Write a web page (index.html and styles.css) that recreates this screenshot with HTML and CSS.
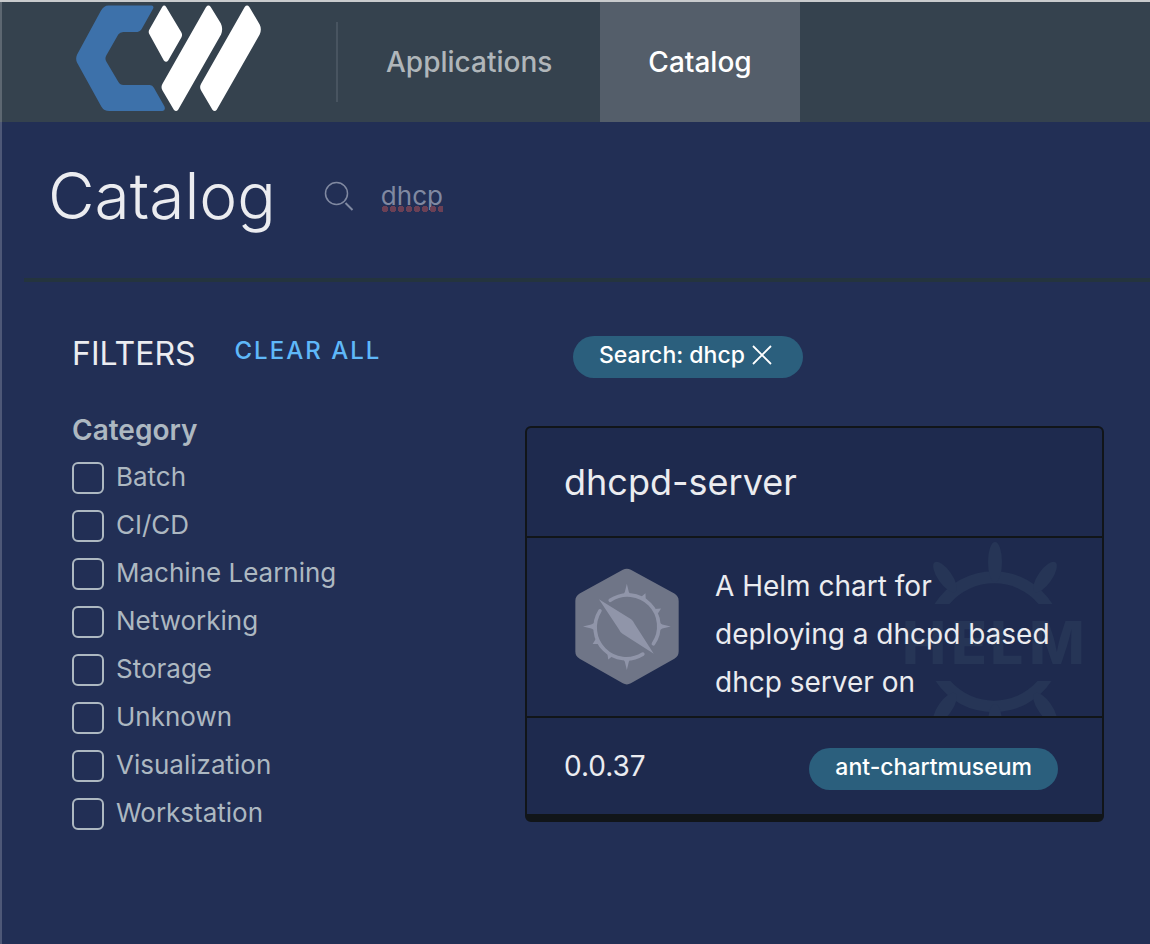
FILE: index.html
```html
<!DOCTYPE html>
<html lang="en">
<head>
<meta charset="utf-8">
<meta name="viewport" content="width=device-width, initial-scale=1">
<title>Catalog</title>
<link rel="stylesheet" href="styles.css">
</head>
<body>
<header class="header">
  <a class="brand" href="#" aria-label="Home">
    <svg class="brand-logo" viewBox="228 14 556 320" aria-hidden="true">
      <path fill="#3d71aa" d="M326 15H455Q463 16 460 24L425 86Q421 93 413 94H370Q360 94 355 102L319 165Q314 174 319 183L355 244Q361 254 370 254H450Q458 255 462 262L494 318Q498 331 488 332H328Q312 332 304 318L231 186Q226 175 231 163L302 32Q311 15 326 15Z"/>
      <g fill="#fff">
        <path d="M487 19Q493 11 499 19L544 94Q549 102 545 110L505 180Q499 188 492 180L449 102Q444 94 449 86Z"/>
        <path d="M619 19Q626 11 633 19L663 68Q671 84 664 102L535 328Q529 336 522 328L488 270Q482 260 488 250Z"/>
        <path d="M735 19Q742 11 749 19L780 72Q787 86 780 102L651 328Q645 336 638 328L604 270Q598 260 604 250Z"/>
      </g>
    </svg>
  </a>
  <nav class="nav">
    <a class="nav-link" href="#">Applications</a>
    <a class="nav-link active" href="#" aria-current="page">Catalog</a>
  </nav>
</header>
<main class="main">
  <div class="page-head">
    <h1 class="title">Catalog</h1>
    <div class="search">
      <svg class="search-icon" viewBox="0 0 30 30" fill="none" stroke="currentColor" aria-hidden="true">
        <circle cx="12.500" cy="12.500" r="11" stroke-width="1.500"/>
        <path d="M21.500 22l7 7" stroke-width="2"/>
      </svg>
      <input class="search-input" type="text" value="dhcp" aria-label="Search catalog" spellcheck="false">
    </div>
  </div>
  <hr class="rule">
  <div class="layout">
    <aside class="filters">
      <div class="filters-head">
        <h2 class="filters-title">FILTERS</h2>
        <button class="clear" type="button">CLEAR ALL</button>
      </div>
      <fieldset class="group">
        <legend class="group-title">Category</legend>
        <label class="option"><input class="box" type="checkbox">Batch</label>
        <label class="option"><input class="box" type="checkbox">CI/CD</label>
        <label class="option"><input class="box" type="checkbox">Machine Learning</label>
        <label class="option"><input class="box" type="checkbox">Networking</label>
        <label class="option"><input class="box" type="checkbox">Storage</label>
        <label class="option"><input class="box" type="checkbox">Unknown</label>
        <label class="option"><input class="box" type="checkbox">Visualization</label>
        <label class="option"><input class="box" type="checkbox">Workstation</label>
      </fieldset>
    </aside>
    <section class="results">
      <span class="pill filter-pill">Search: dhcp
        <button class="remove" type="button" aria-label="Remove filter">
          <svg class="remove-icon" viewBox="0 0 20 20" stroke="currentColor" stroke-width="1.800" aria-hidden="true"><path d="M1 1l18 18M19 1L1 19"/></svg>
        </button>
      </span>
      <article class="card">
        <h3 class="card-title">dhcpd-server</h3>
        <div class="card-body">
          <svg class="helm" viewBox="900 538 185 178" aria-hidden="true">
            <g fill="#263556">
              <path d="M934.500 604A69.500 69.500 0 0 1 1052.500 604H1038.500A58 58 0 0 0 949.500 604Z"/>
              <path d="M935.500 681A69.500 69.500 0 0 0 1051.500 681H1037.500A58 58 0 0 1 950.500 681Z"/>
              <ellipse cx="995" cy="562" rx="7" ry="20"/>
              <ellipse cx="995" cy="724" rx="7" ry="20"/>
              <ellipse cx="945" cy="577" rx="7" ry="18" transform="rotate(-35 945 577)"/>
              <ellipse cx="1045" cy="577" rx="7" ry="18" transform="rotate(35 1045 577)"/>
              <ellipse cx="945" cy="708" rx="7" ry="18" transform="rotate(35 945 708)"/>
              <ellipse cx="1045" cy="708" rx="7" ry="18" transform="rotate(-35 1045 708)"/>
              <text class="helm-word" x="902 951 990 1029" y="664">HELM</text>
            </g>
          </svg>
          <svg class="chart-icon" viewBox="45 37 313 352" aria-hidden="true">
            <path fill="#6f7587" d="M189 42Q201 36 213 42L344 114Q357 122 357 136V288Q357 302 344 310L213 384Q201 391 189 384L59 310Q46 302 46 288V136Q46 122 59 114Z"/>
            <g fill="none" stroke="#9095a9" stroke-width="11" stroke-linecap="round">
              <path d="M151 134A94 94 0 0 1 281 265"/>
              <path d="M120 166A94 94 0 0 0 249 296"/>
            </g>
            <g fill="#9095a9">
              <path d="M117 131L214 191Q221 196 225 206L282 295L188 235Q181 230 177 221Z"/>
              <path d="M201 84L207 109L214 120H188L195 109Z"/>
              <path d="M333 213L308 219L297 226V200L308 207Z"/>
              <path d="M201 344L195 319L188 306H214L207 319Z"/>
              <path d="M69 213L94 207L107 200V226L94 219Z"/>
              <path d="M257 113L258 134L242 126Z"/>
              <path d="M304 159L294 175L285 160Z"/>
              <path d="M98 266L108 250L119 266Z"/>
              <path d="M145 312L142 291L160 300Z"/>
            </g>
          </svg>
          <p class="card-text">A Helm chart for deploying a dhcpd based dhcp server on</p>
        </div>
        <div class="card-foot">
          <span class="version">0.0.37</span>
          <span class="pill">ant-chartmuseum</span>
        </div>
      </article>
    </section>
  </div>
</main>
</body>
</html>
```
FILE: styles.css
```css
* {
  box-sizing: border-box;
}

body {
  display: flex;
  flex-direction: column;
  min-height: 100vh;
  margin: 0;
  border-top: 2px solid #c9cbcd;
  background: #222f55;
  color: #ebecf0;
  font-family: Inter, "Liberation Sans", sans-serif;
}

h1,
h2,
h3,
p {
  margin: 0;
  font-weight: 400;
}

button,
input {
  padding: 0;
  border: 0;
  background: none;
  color: inherit;
  font: inherit;
}

.header {
  display: flex;
  height: 120px;
  border-left: 2px solid rgba(255, 255, 255, 0.2);
  background: #35424e;
}

.brand {
  display: flex;
  align-items: center;
  padding: 0 75px 8px 74px;
}

.brand-logo {
  width: 185px;
  height: 107px;
}

.nav {
  display: flex;
  align-items: center;
}

.nav::before {
  width: 2px;
  height: 80px;
  background: #485460;
  content: "";
}

.nav-link {
  display: flex;
  align-items: center;
  height: 100%;
  padding: 0 48px;
  color: #b0b6ba;
  font-size: 28px;
  font-weight: 500;
  text-decoration: none;
}

.nav-link.active {
  background: #545e6a;
  color: #fff;
}

.main {
  flex: 1;
  border-left: 2px solid rgba(255, 255, 255, 0.2);
}

.page-head {
  display: flex;
  align-items: center;
  padding: 34px 46px 42px;
  gap: 48px;
}

.title {
  font-size: 64px;
  font-weight: 300;
  line-height: 80px;
}

.search {
  position: relative;
  display: flex;
  flex: 1;
  align-items: center;
  gap: 27px;
  color: #8089a1;
}

.search-icon {
  width: 30px;
  height: 30px;
}

.search-input {
  flex: 1;
  min-width: 0;
  font-size: 26px;
  line-height: 40px;
}

.search::after {
  position: absolute;
  top: 30px;
  left: 57px;
  width: 62px;
  height: 6px;
  background: radial-gradient(circle, #6b4055 3px, transparent 3px) 0 0 / 8px 6px repeat-x;
  content: "";
}

.rule {
  height: 4px;
  margin: 0 0 0 22px;
  border: 0;
  background: #24343e;
}

.layout {
  display: grid;
  grid-template-columns: 453px 1fr;
  padding: 52px 46px 40px 70px;
}

.filters-head {
  display: flex;
  align-items: flex-start;
  gap: 39px;
}

.filters-title {
  font-size: 32px;
  line-height: 40px;
}

.clear {
  color: #5fb8f9;
  font-size: 24px;
  font-weight: 500;
  letter-spacing: 2px;
  line-height: 34px;
}

.group {
  min-width: 0;
  margin: 36px 0 0;
  padding: 0;
  border: 0;
  color: #adb8c1;
}

.group-title {
  margin-bottom: 4px;
  padding: 0;
  font-size: 28px;
  font-weight: 600;
  line-height: 40px;
}

.option {
  display: flex;
  height: 48px;
  gap: 12px;
  font-size: 26px;
  line-height: 46px;
}

.box {
  width: 32px;
  height: 32px;
  margin: 8px 0;
  border: 2px solid #adb8c1;
  border-radius: 6px;
  appearance: none;
}

.box:checked {
  background: #5fb8f9;
}

.pill {
  display: inline-flex;
  align-items: center;
  height: 42px;
  padding: 0 26px 4px;
  border-radius: 21px;
  background: #2b5f7d;
  color: #fff;
  font-size: 23px;
  font-weight: 500;
}

.filter-pill {
  margin: 2px 0 0 48px;
  padding-right: 31px;
  gap: 7px;
}

.remove {
  display: flex;
}

.remove-icon {
  width: 20px;
  height: 20px;
}

.card {
  margin-top: 48px;
  border: 2px solid #111519;
  border-bottom-width: 8px;
  border-radius: 6px;
  background: #1e2a4e;
}

.card-title {
  padding: 30px 37px;
  font-size: 36px;
  line-height: 48px;
}

.card-body {
  position: relative;
  display: flex;
  align-items: flex-start;
  padding: 24px 36px 10px 48px;
  border: solid #111519;
  border-width: 2px 0;
  gap: 36px;
}

.helm {
  position: absolute;
  top: 0;
  right: 17px;
  width: 185px;
  height: 178px;
}

.helm-word {
  font-family: "Liberation Sans Narrow", Inter, sans-serif;
  font-size: 59px;
  font-weight: 800;
}

.chart-icon {
  flex: none;
  width: 104px;
  height: 117px;
  margin-top: 6px;
}

.card-text {
  position: relative;
  font-size: 28px;
  line-height: 48px;
}

.card-foot {
  display: flex;
  align-items: flex-start;
  justify-content: space-between;
  padding: 30px 44px 24px 37px;
}

.version {
  font-size: 28px;
  line-height: 36px;
}
```
